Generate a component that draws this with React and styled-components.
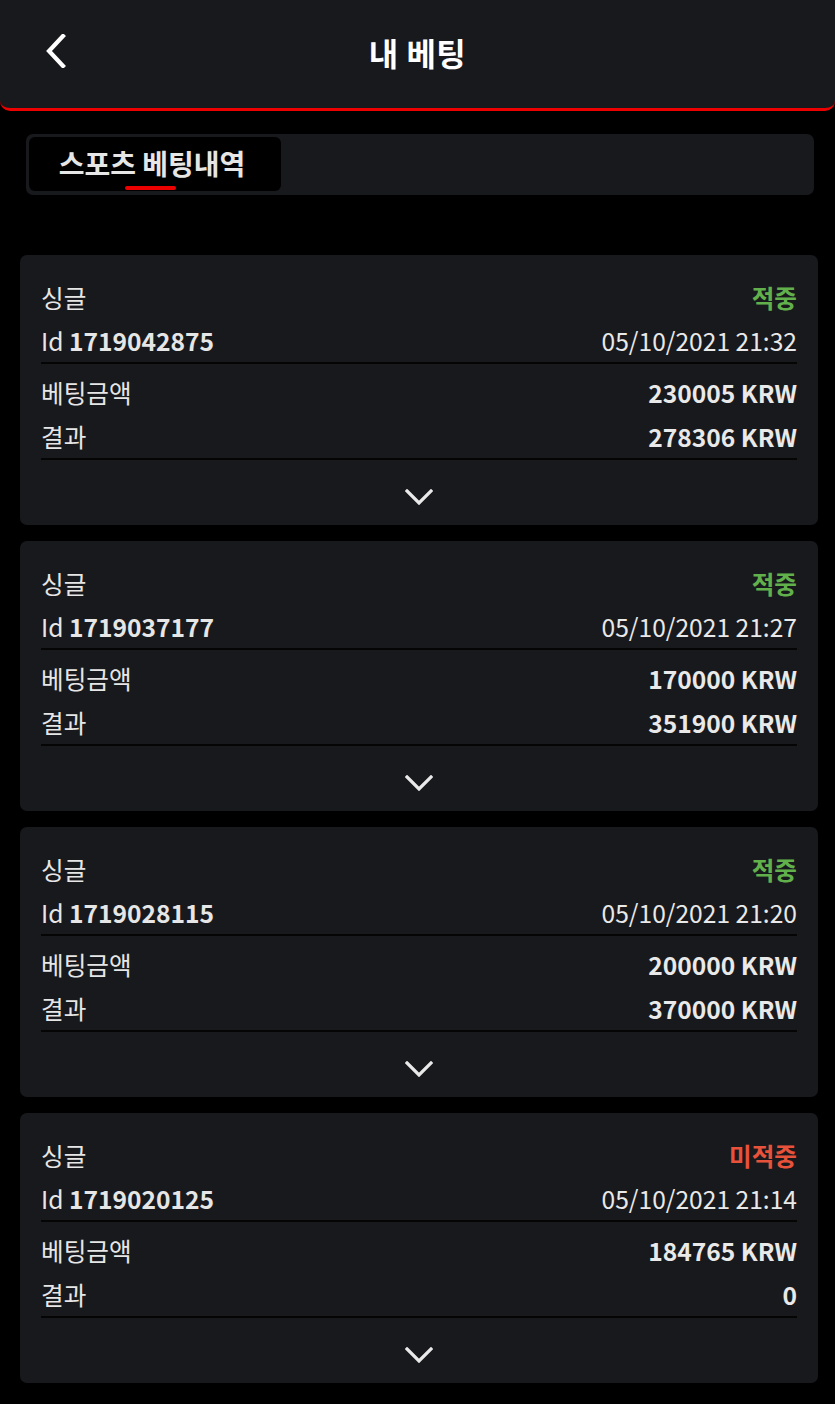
import React from 'react';
import styled, { createGlobalStyle } from 'styled-components';

const GlobalStyle = createGlobalStyle`
  html, body {
    margin: 0;
    padding: 0;
    background: #000;
  }
  body {
    font-family: 'Noto Sans CJK KR', 'Noto Sans', sans-serif;
    color: #e9e9e9;
  }
`;

const Page = styled.div`
  width: 835px;
  min-height: 1404px;
  background: #000;
`;

const Header = styled.header`
  position: relative;
  height: 108px;
  background: #18191d;
  border-bottom: 3px solid #ec0000;
  border-radius: 0 0 10px 10px;
  display: flex;
  align-items: center;
  justify-content: center;
`;

const BackButton = styled.button`
  position: absolute;
  left: 38px;
  top: 30px;
  width: 36px;
  height: 42px;
  padding: 0;
  border: 0;
  background: transparent;
  display: flex;
  align-items: center;
  justify-content: center;
  cursor: pointer;
`;

const Title = styled.h1`
  margin: 0 0 4px;
  font-size: 32px;
  font-weight: 700;
  color: #fff;
  letter-spacing: 0.5px;
`;

const TabBar = styled.div`
  margin: 23px 21px 0 26px;
  padding: 3px 3px 4px;
  background: #18191d;
  border-radius: 7px;
  display: flex;
`;

const Tab = styled.div`
  position: relative;
  width: 252px;
  height: 54px;
  background: ${p => (p.active ? '#000' : 'transparent')};
  border-radius: 6px;
  display: flex;
  align-items: center;
  justify-content: center;
  font-size: 28px;
  font-weight: 700;
  color: #e6e6e6;
  padding: 0 6px 3px 0;
  box-sizing: border-box;
`;

const TabMark = styled.span`
  position: absolute;
  left: 96px;
  bottom: 1px;
  width: 51px;
  height: 4px;
  border-radius: 2px;
  background: #ec0000;
`;

const List = styled.div`
  padding: 60px 17px 0 20px;
  display: flex;
  flex-direction: column;
  gap: 16px;
`;

const Card = styled.div`
  background: #18191d;
  border-radius: 7px;
  padding: 20px 21px 0;
`;

const Section = styled.div`
  padding-top: ${p => p.pt || 0}px;
  border-bottom: 2px solid #050505;
`;

const Row = styled.div`
  height: ${p => p.h || 44}px;
  display: flex;
  align-items: center;
  justify-content: space-between;
  font-size: 24.6px;
  line-height: 1;
`;

const Label = styled.span`
  color: #e6e6e6;
`;

const Value = styled.span`
  font-weight: ${p => (p.bold ? 700 : 400)};
  color: ${p => p.color || '#e9e9e9'};
`;

const Strong = styled.b`
  font-weight: 700;
`;

const Toggle = styled.div`
  height: 65px;
  display: flex;
  align-items: center;
  justify-content: center;
  padding-top: 9px;
  box-sizing: border-box;
`;

const bets = [
  { id: '1719042875', date: '05/10/2021 21:32', amount: '230005 KRW', result: '278306 KRW', win: true },
  { id: '1719037177', date: '05/10/2021 21:27', amount: '170000 KRW', result: '351900 KRW', win: true },
  { id: '1719028115', date: '05/10/2021 21:20', amount: '200000 KRW', result: '370000 KRW', win: true },
  { id: '1719020125', date: '05/10/2021 21:14', amount: '184765 KRW', result: '0', win: false },
];

const ChevronDown = () => (
  <svg width="28" height="16" viewBox="0 0 28 16" fill="none">
    <path d="M2 2l12 12L26 2" stroke="#e9e9e9" strokeWidth="3.2" strokeLinecap="square" />
  </svg>
);

const ChevronLeft = () => (
  <svg width="22" height="34" viewBox="0 0 22 34" fill="none">
    <path d="M18 2L4 17l14 15" stroke="#fff" strokeWidth="4.2" strokeLinecap="square" />
  </svg>
);

const BetCard = ({ bet }) => (
  <Card>
    <Section>
      <Row h={44}>
        <Label>싱글</Label>
        <Value bold color={bet.win ? '#62b04c' : '#e8523a'}>{bet.win ? '적중' : '미적중'}</Value>
      </Row>
      <Row h={43}>
        <Label>
          Id <Strong>{bet.id}</Strong>
        </Label>
        <Value>{bet.date}</Value>
      </Row>
    </Section>
    <Section pt={6}>
      <Row h={44}>
        <Label>베팅금액</Label>
        <Value bold>{bet.amount}</Value>
      </Row>
      <Row h={44}>
        <Label>결과</Label>
        <Value bold>{bet.result}</Value>
      </Row>
    </Section>
    <Toggle>
      <ChevronDown />
    </Toggle>
  </Card>
);

export default function App() {
  return (
    <Page>
      <GlobalStyle />
      <Header>
        <BackButton aria-label="back">
          <ChevronLeft />
        </BackButton>
        <Title>내 베팅</Title>
      </Header>
      <TabBar>
        <Tab active>
          스포츠 베팅내역
          <TabMark />
        </Tab>
      </TabBar>
      <List>
        {bets.map(bet => (
          <BetCard key={bet.id} bet={bet} />
        ))}
      </List>
    </Page>
  );
}
